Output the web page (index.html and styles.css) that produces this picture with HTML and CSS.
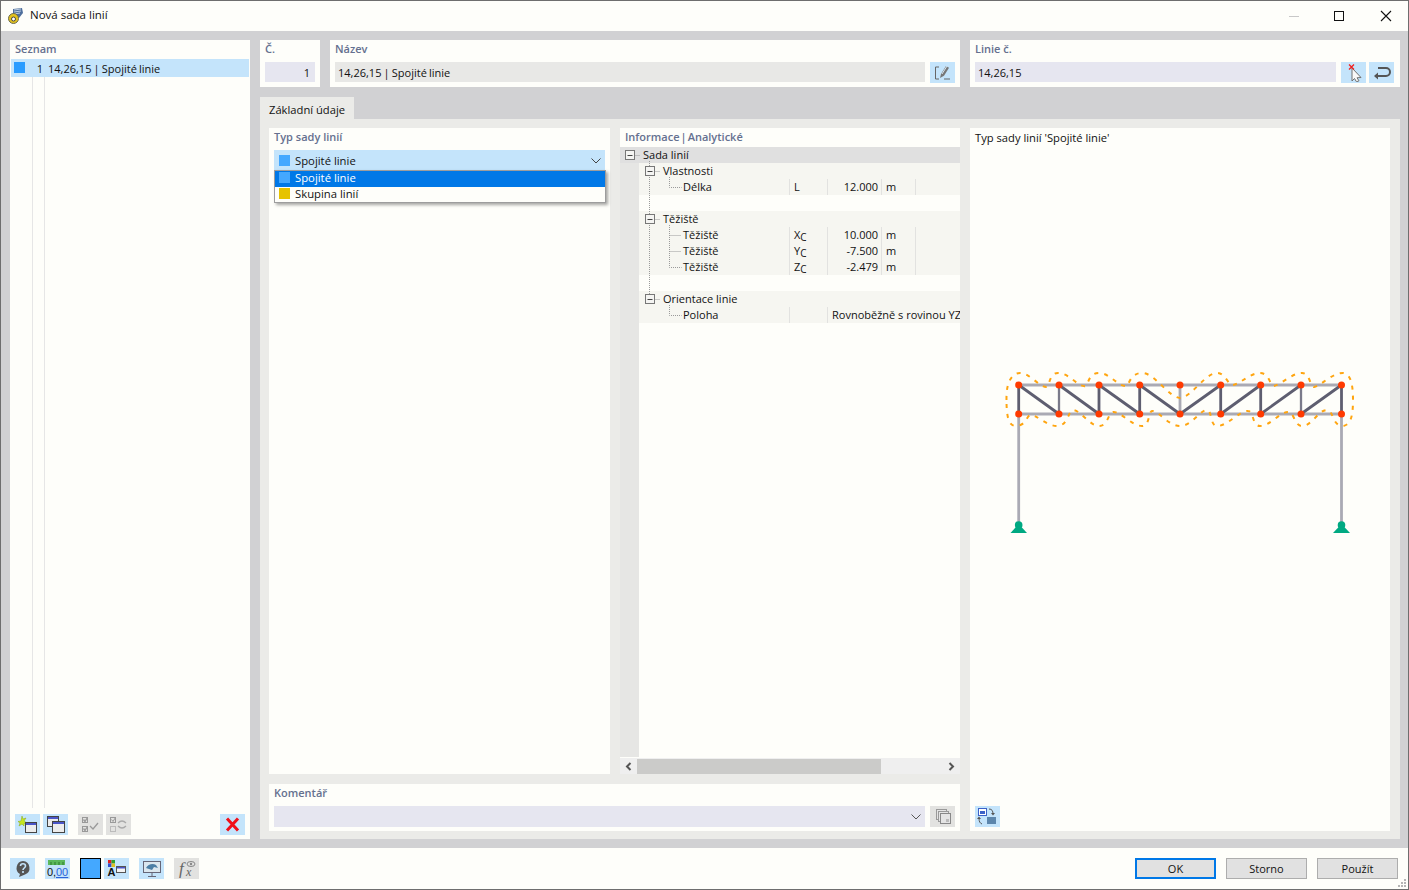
FILE: index.html
```html
<!DOCTYPE html>
<html lang="cs">
<head>
<meta charset="utf-8">
<title>Nová sada linií</title>
<link rel="stylesheet" href="styles.css">
</head>
<body>
<div class="window">
  <header class="titlebar">
    <svg class="app-icon" width="18" height="18" viewBox="0 0 18 18">
      <path d="M6 2l9-1 1 5-4 5H6z" fill="#4f6f9c"/>
      <path d="M7 3l7-1M7 5l7-1M7 7l6-1" stroke="#b9cbe0" stroke-width="1"/>
      <circle cx="6.5" cy="11.5" r="5" fill="#e3c21c" stroke="#6a6a50"/>
      <circle cx="6.5" cy="12" r="2" fill="#fefefa" stroke="#444" stroke-width="1"/>
    </svg>
    <span class="title-text">Nová sada linií</span>
    <div class="win-controls">
      <svg width="140" height="14" viewBox="0 0 140 14">
        <path d="M46 7.5h10" stroke="#c8c8c8"/>
        <rect x="91.5" y="2.5" width="9" height="9" fill="none" stroke="#111"/>
      </svg>
      <svg class="close-x" width="12" height="12" viewBox="0 0 12 12"><path d="M1 1l10 10M11 1L1 11" stroke="#111" stroke-width="1.1"/></svg>
    </div>
  </header>

  <div class="main">
    <aside class="sidebar">
      <div class="panel-label">Seznam</div>
      <div class="list">
        <div class="list-row">
          <span class="swatch swatch-blue list-swatch"></span>
          <span class="list-no">1</span>
          <span class="list-name">14,26,15 | Spojité linie</span>
        </div>
      </div>
      <div class="side-tools">
        <button class="ib ib-blue"><svg width="21" height="19" viewBox="0 0 21 19"><path d="M5 1l1 3 3-1-2 3 3 2-3 .5L7 11 5 9 2 11l1-3-2-1.500 3-.5z" fill="#c5e61f" stroke="#8aa80e" stroke-width=".5"/><rect x="8.500" y="7.500" width="11" height="10" fill="#ececec" stroke="#444"/><rect x="9" y="8" width="10" height="2" fill="#4a55c8"/></svg></button>
        <button class="ib ib-blue"><svg width="21" height="19" viewBox="0 0 21 19"><rect x="2.500" y="1.500" width="11" height="10" fill="#ececec" stroke="#444"/><rect x="3" y="2" width="10" height="2" fill="#4a55c8"/><rect x="7.500" y="6.500" width="12" height="11" fill="#ececec" stroke="#444"/><rect x="8" y="7" width="11" height="2" fill="#4a55c8"/></svg></button>
        <button class="ib ib-grey tool-gap"><svg width="21" height="19" viewBox="0 0 21 19"><rect x="2.500" y="2.500" width="5" height="5" fill="none" stroke="#999"/><rect x="2.500" y="11.500" width="5" height="5" fill="none" stroke="#999"/><path d="M3.500 4.500l1.500 2 2.500-4M3.500 13.500l1.500 2 2.500-4M10 11l3 3 5-6" fill="none" stroke="#999" stroke-width="1.300"/></svg></button>
        <button class="ib ib-grey"><svg width="21" height="19" viewBox="0 0 21 19"><rect x="2.500" y="2.500" width="5" height="5" fill="none" stroke="#999"/><rect x="2.500" y="11.500" width="5" height="5" fill="none" stroke="#bbb"/><path d="M3.500 4.500l1.500 2 2.500-4" fill="none" stroke="#999"/><path d="M10 8c3-3 6-2 8 0M18 11c-3 3-6 2-8 0" fill="none" stroke="#aaa" stroke-width="1.300"/></svg></button>
        <button class="ib ib-blue tool-end"><svg width="21" height="19" viewBox="0 0 21 19"><path d="M5 3.500l11 12M16 3.500l-11 12" stroke="#f0101a" stroke-width="3"/></svg></button>
      </div>
    </aside>

    <section class="content">
      <div class="toprow">
        <div class="card card-no">
          <div class="panel-label">Č.</div>
          <div class="fieldrow"><div class="field field-lav field-right">1</div></div>
        </div>
        <div class="card card-name">
          <div class="panel-label">Název</div>
          <div class="fieldrow">
            <div class="field field-grey pipe-text">14,26,15 | Spojité linie</div>
            <button class="ib ib-blue"><svg width="21" height="19" viewBox="0 0 21 19"><path d="M7 4H3.500v12H7M12 16h6" fill="none" stroke="#666"/><path d="M8 15l1-4 5-8 3 1.700-5 8z" fill="#777"/><path d="M10 11l5-8" stroke="#d8e8f4"/></svg></button>
          </div>
        </div>
        <div class="card card-lines">
          <div class="panel-label">Linie č.</div>
          <div class="fieldrow">
            <div class="field field-lav">14,26,15</div>
            <button class="ib ib-blue"><svg width="21" height="19" viewBox="0 0 21 19"><path d="M9 5l9 9.500-4 .3 2 3-2.500 1-2-3.300-2.500 2.500z" fill="#f8f8f8" stroke="#707070"/><path d="M6 1.500l5 5M11 1.500l-5 5" stroke="#f02020" stroke-width="1.300"/></svg></button>
            <button class="ib ib-blue btn-tight"><svg width="21" height="19" viewBox="0 0 21 19"><path d="M7 5h8a3.500 3.500 0 0 1 0 8H4" fill="none" stroke="#555" stroke-width="2"/><path d="M7 9.500L3 13l4 3.500z" fill="#555"/></svg></button>
          </div>
        </div>
      </div>

      <div class="tabbar"><div class="tab">Základní údaje</div></div>

      <div class="pane">
        <div class="pane-left">
          <div class="pane-upper">
            <div class="type-panel">
              <div class="panel-label">Typ sady linií</div>
              <div class="combo">
                <span class="swatch swatch-light"></span>
                <span>Spojité linie</span>
                <svg class="chev" width="10" height="6" viewBox="0 0 10 6"><path d="M.5.5L5 5 9.500.5" fill="none" stroke="#444"/></svg>
              </div>
              <div class="popup">
                <div class="popup-item popup-sel"><span class="swatch swatch-light"></span><span>Spojité linie</span></div>
                <div class="popup-item"><span class="swatch swatch-yellow"></span><span>Skupina linií</span></div>
              </div>
            </div>

            <div class="info-panel">
              <div class="panel-label info-label">Informace | Analytické</div>
              <div class="tree">
                <div class="tree-gutter"></div>
                <div class="tree-body">
                  <div class="tr tr-head"><span class="tn lvl0">Sada linií</span></div>
                  <div class="tr tr-alt"><span class="tn lvl1">Vlastnosti</span></div>
                  <div class="tr tr-alt"><span class="tn lvl2">Délka</span><span class="ts">L</span><span class="tv">12.000</span><span class="tu">m</span><span class="te"></span></div>
                  <div class="tr"></div>
                  <div class="tr tr-alt"><span class="tn lvl1">Těžiště</span></div>
                  <div class="tr tr-alt"><span class="tn lvl2">Těžiště</span><span class="ts">X<span class="sub">C</span></span><span class="tv">10.000</span><span class="tu">m</span><span class="te"></span></div>
                  <div class="tr tr-alt"><span class="tn lvl2">Těžiště</span><span class="ts">Y<span class="sub">C</span></span><span class="tv">-7.500</span><span class="tu">m</span><span class="te"></span></div>
                  <div class="tr tr-alt"><span class="tn lvl2">Těžiště</span><span class="ts">Z<span class="sub">C</span></span><span class="tv">-2.479</span><span class="tu">m</span><span class="te"></span></div>
                  <div class="tr"></div>
                  <div class="tr tr-alt"><span class="tn lvl1">Orientace linie</span></div>
                  <div class="tr tr-alt"><span class="tn lvl2">Poloha</span><span class="ts"></span><span class="tw">Rovnoběžně s rovinou YZ</span></div>
                </div>
                <svg class="tree-lines" width="100" height="176" viewBox="0 0 100 176">
                  <g fill="none" stroke="#9a9a9a" stroke-dasharray="1 1">
                    <path d="M14.500 8.500h6M34.500 24.500h6M34.500 72.500h6M34.500 152.500h6"/>
                    <path d="M29.500 14v134"/>
                    <path d="M49.500 30v10.500h12M49.500 78v42.500h12M49.500 88.500h12M49.500 104.500h12M49.500 158v10.500h12"/>
                  </g>
                  <g fill="#f4f4f2" stroke="#777">
                    <rect x="5.500" y="3.500" width="9" height="9"/>
                    <rect x="25.500" y="19.500" width="9" height="9"/>
                    <rect x="25.500" y="67.500" width="9" height="9"/>
                    <rect x="25.500" y="147.500" width="9" height="9"/>
                  </g>
                  <path d="M7.500 8.500h5M27.500 24.500h5M27.500 72.500h5M27.500 152.500h5" stroke="#444"/>
                </svg>
              </div>
              <div class="hscroll">
                <svg class="arrow" width="17" height="15" viewBox="0 0 17 15"><path d="M10.500 4L7 7.500l3.500 3.500" fill="none" stroke="#555" stroke-width="2"/></svg>
                <div class="thumb"></div>
                <svg class="arrow arrow-end" width="17" height="15" viewBox="0 0 17 15"><path d="M6.500 4L10 7.500 6.500 11" fill="none" stroke="#555" stroke-width="2"/></svg>
              </div>
            </div>
          </div>

          <div class="comment">
            <div class="panel-label">Komentář</div>
            <div class="fieldrow">
              <div class="field field-lav field-combo"><svg class="chev" width="10" height="6" viewBox="0 0 10 6"><path d="M.5.5L5 5 9.500.5" fill="none" stroke="#555"/></svg></div>
              <button class="ib ib-grey"><svg width="21" height="19" viewBox="0 0 21 19"><rect x="4.500" y="2.500" width="10" height="10" fill="#e4e4e4" stroke="#999"/><rect x="6.500" y="4.500" width="10" height="10" fill="#e4e4e4" stroke="#999"/><rect x="8.500" y="6.500" width="10" height="10" fill="#e4e4e4" stroke="#888"/><rect x="14" y="12" width="3" height="3" fill="#bbb"/></svg></button>
            </div>
          </div>
        </div>

        <div class="preview">
          <div class="preview-title">Typ sady linií 'Spojité linie'</div>
          <div class="canvas">
            <svg class="truss" width="420" height="640" viewBox="970 147 420 640">
              <g stroke="#aaaab4" stroke-width="2.800" fill="none">
                <path d="M1018.700 385H1341.500M1018.700 414H1341.500M1018.700 414V528M1341.500 414V528"/>
                <path d="M1180 385v29"/>
              </g>
              <g stroke="#5e5e70" stroke-width="2.800" fill="none">
                <path d="M1018.700 385v29M1099 385v29M1139.700 385v29M1220.700 385v29M1260.700 385v29M1341.500 385v29"/>
                <path d="M1018.700 385L1059 414M1059 385L1099 414M1099 385L1139.700 414M1139.700 385L1180 414M1180 414L1220.700 385M1220.700 414L1260.700 385M1260.700 414L1301 385M1301 414L1341.500 385"/>
              </g>
              <path d="M1059 385v29M1301 385v29" stroke="#7a7a8a" stroke-width="2.300"/>
              <path fill="none" stroke="#ffa50f" stroke-width="2" stroke-dasharray="4 6"
                d="M1006.500 400C1006 382 1012 373 1020 373C1030 373 1040 388 1047 387C1050 383 1050 373 1058 373C1070 373 1078 388 1086 386C1089 381 1090 373 1099 373C1110 373 1118 387 1127 386C1130 381 1132 373 1142 373C1155 373 1168 397 1180 398C1192 397 1205 373 1217 373C1226 373 1228 386 1233 385C1240 384 1250 373 1260 373C1270 373 1270 387 1274 386C1282 384 1292 373 1302 373C1310 373 1310 387 1314 387C1322 385 1332 373 1343 373C1350 374 1353 382 1353 400C1353 418 1350 425 1343 426C1332 426 1334 411 1327 410C1318 410 1312 426 1302 426C1294 426 1294 411 1288 412C1280 412 1270 426 1260 426C1252 426 1254 411 1248 411C1240 410 1228 426 1217 426C1210 426 1212 410 1207 410C1200 410 1192 426 1180 426C1168 426 1158 410 1152 411C1148 412 1150 426 1142 426C1132 426 1120 411 1113 412C1108 413 1108 426 1099 426C1090 426 1080 410 1073 410C1068 411 1068 426 1057 426C1046 426 1036 414 1030 415C1026 417 1026 426 1015 426C1009 425 1006.500 418 1006.500 400Z"/>
              <g fill="#ff3a00">
                <circle cx="1018.700" cy="385" r="3.500"/><circle cx="1059" cy="385" r="3.500"/><circle cx="1099" cy="385" r="3.500"/><circle cx="1139.700" cy="385" r="3.500"/><circle cx="1180" cy="385" r="3.500"/><circle cx="1220.700" cy="385" r="3.500"/><circle cx="1260.700" cy="385" r="3.500"/><circle cx="1301" cy="385" r="3.500"/><circle cx="1341.500" cy="385" r="3.500"/>
                <circle cx="1018.700" cy="414" r="3.500"/><circle cx="1059" cy="414" r="3.500"/><circle cx="1099" cy="414" r="3.500"/><circle cx="1139.700" cy="414" r="3.500"/><circle cx="1180" cy="414" r="3.500"/><circle cx="1220.700" cy="414" r="3.500"/><circle cx="1260.700" cy="414" r="3.500"/><circle cx="1301" cy="414" r="3.500"/><circle cx="1341.500" cy="414" r="3.500"/>
              </g>
              <g fill="#00a982">
                <circle cx="1018.700" cy="525" r="3.800"/><path d="M1018.700 524L1027 533H1010.500Z"/>
                <circle cx="1341.500" cy="525" r="3.800"/><path d="M1341.500 524L1350 533H1333Z"/>
              </g>
            </svg>
          </div>
          <button class="ib ib-blue preview-btn"><svg width="21" height="19" viewBox="0 0 21 19"><rect x="1.500" y="1.500" width="8" height="7" fill="#fff" stroke="#3c62c8"/><rect x="3" y="4" width="5" height="3" fill="#3c62c8"/><rect x="10" y="10" width="9" height="7" fill="#5c86ac"/><path d="M12 2c3 0 4 2 4 5M5 17c-2-1-3-2-3-6" fill="none" stroke="#555"/><path d="M14 6l2 2.500L18 6zM0 12l2-2.500L4 12z" fill="#555"/></svg></button>
        </div>
      </div>
    </section>
  </div>

  <footer class="footer">
    <button class="ib ib-blue"><svg width="21" height="19" viewBox="0 0 21 19"><path d="M11 2a7 7 0 0 1 2 13.500L7 18l1-3A7 7 0 0 1 11 2z" fill="#555"/><path d="M8.500 7c0-3 5-3 5 0 0 2-2.500 2-2.500 4M11 12v2" fill="none" stroke="#c4e4fb" stroke-width="1.600"/></svg></button>
    <button class="ib ib-blue foot-gap"><svg width="23" height="20" viewBox="0 0 23 20"><rect x="2" y="1" width="17" height="5" fill="#5cb85c"/><path d="M5 3v3M9 3v3M13 3v3M17 3v3" stroke="#2f7a2f"/><text x="1" y="17" class="num-a">0,</text><text x="10" y="17" class="num-b">00</text></svg></button>
    <span class="foot-swatch"></span>
    <button class="ib ib-blue foot-tight"><svg width="21" height="19" viewBox="0 0 21 19"><rect x="2" y="1" width="3.500" height="3.500" fill="#e02020"/><rect x="5.500" y="1" width="3.500" height="3.500" fill="#30a030"/><rect x="2" y="4.500" width="3.500" height="3.500" fill="#3050d0"/><rect x="5.500" y="4.500" width="3.500" height="3.500" fill="#e0c020"/><text x="1.500" y="17" class="glyph-a">A</text><rect x="10.500" y="7.500" width="9" height="6" fill="#f4f4f4" stroke="#555"/><rect x="11" y="8" width="8" height="1.500" fill="#4a55c8"/></svg></button>
    <button class="ib ib-blue foot-gap"><svg width="21" height="19" viewBox="0 0 21 19"><rect x="2.500" y="2.500" width="17" height="11" fill="#dbe7ef" stroke="#667"/><path d="M5 9c2-4 7-5 10-3l2 3-4-1-2 3z" fill="#4c7fa6"/><path d="M11 13.500V17M7 17.500h8" stroke="#667"/></svg></button>
    <button class="ib ib-grey foot-gap"><svg width="21" height="19" viewBox="0 0 21 19"><text x="3" y="15" class="glyph-f">f</text><text x="10" y="17" class="glyph-x">x</text><ellipse cx="15" cy="5" rx="4" ry="2.500" fill="none" stroke="#888"/><circle cx="15" cy="5" r="1.200" fill="#888"/></svg></button>
    <div class="actions">
      <button class="btn btn-default">OK</button>
      <button class="btn">Storno</button>
      <button class="btn">Použít</button>
    </div>
    <svg class="grip" width="10" height="10" viewBox="0 0 10 10"><path d="M7 1h2v2H7zM4 4h2v2H4zM7 4h2v2H7zM1 7h2v2H1zM4 7h2v2H4zM7 7h2v2H7z" fill="#b5b5b5"/></svg>
  </footer>
</div>
</body>
</html>
```
FILE: styles.css
```css
* { box-sizing: border-box; }
html, body { margin: 0; padding: 0; height: 100%; }
body { font-family: "Open Sans", "Noto Sans", sans-serif; font-size: 11px; color: #111; background: #d1d1d3; }
button { font: inherit; color: inherit; padding: 0; border: 0; }

.window { width: 1409px; height: 890px; border: 1px solid #6e6e6e; display: flex; flex-direction: column; background: #fefefa; overflow: hidden; }

.titlebar { height: 30px; flex: none; display: flex; align-items: center; padding-left: 6px; padding-bottom: 1px; position: relative; }
.app-icon { flex: none; }
.title-text { margin-left: 5px; font-size: 11.500px; position: relative; top: -1px; }
.win-controls { margin-left: auto; display: flex; align-items: center; padding-right: 16px; }
.win-controls svg:first-child { margin-right: -2px; }
.close-x { margin-left: -1px; }

.main { flex: 1; min-height: 0; background: #d1d1d3; display: flex; gap: 10px; padding: 9px 8px 9px 9px; }

.sidebar { width: 240px; flex: none; background: #fefefa; display: flex; flex-direction: column; padding: 1px; }
.panel-label { font-weight: 600; color: #65708f; line-height: 15px; height: 15px; }
.sidebar .panel-label { padding-left: 4px; margin: 0 0 3px; }
.list { flex: 1; position: relative; background: linear-gradient(#e6e6e6, #e6e6e6) 21px 0 / 1px 100% no-repeat, linear-gradient(#e6e6e6, #e6e6e6) 33px 0 / 1px 100% no-repeat; }
.list-row { height: 18px; background: #c4e4fb; display: flex; align-items: center; }
.list-swatch { margin-left: 3px; margin-top: -2px; }
.list-no { width: 18px; text-align: right; }
.list-name { margin-left: 5px; word-spacing: -.7px; }
.pipe-text { word-spacing: -.7px; }
.swatch { width: 11px; height: 11px; flex: none; display: inline-block; }
.swatch-blue { background: #2a9cff; }
.swatch-light { background: #44a8ff; }
.swatch-yellow { background: #e6c300; }

.side-tools { display: flex; height: 21px; padding-left: 4px; padding-right: 4px; margin: 6px 0 3px; gap: 3px; }
.ib { width: 25px; height: 21px; flex: none; display: flex; align-items: center; justify-content: center; }
.ib svg { display: block; }
.ib-blue { background: #c4e4fb; }
.ib-grey { background: #e2e2e0; }
.tool-gap { margin-left: 7px; }
.tool-end { margin-left: auto; }

.content { flex: 1; min-width: 0; display: flex; flex-direction: column; }
.toprow { height: 47px; flex: none; display: flex; gap: 10px; }
.card { background: #fefefa; padding: 1px 5px 4px; display: flex; flex-direction: column; }
.card-no { width: 60px; }
.card-name { width: 630px; }
.card-lines { width: 430px; padding-right: 6px; }
.card .panel-label { margin-bottom: 6px; }
.fieldrow { display: flex; gap: 5px; height: 21px; }
.field { flex: 1; min-width: 0; height: 20px; line-height: 22px; padding: 0 3px; }
.field-lav { background: #e6e6f0; }
.field-grey { background: #e8e8e6; }
.field-right { text-align: right; padding-right: 5px; }
.field-combo { display: flex; align-items: center; justify-content: flex-end; padding-right: 4px; height: 21px; }
.btn-tight { margin-left: -2px; }

.tabbar { flex: none; margin-top: 10px; height: 22px; display: flex; }
.tab { width: 94px; background: #ebebe8; line-height: 26px; padding-left: 9px; height: 22px; font-size: 11.200px; }

.pane { flex: 1; min-height: 0; background: #ebebe8; padding: 9px 10px 8px 9px; display: flex; gap: 10px; }
.pane-left { width: 691px; flex: none; display: flex; flex-direction: column; gap: 10px; }
.pane-upper { flex: 1; min-height: 0; display: flex; gap: 10px; }

.type-panel { width: 341px; flex: none; background: #fefefa; padding: 1px 5px; position: relative; font-size: 11.300px; }
.type-panel .panel-label { margin-bottom: 6px; font-size: 11px; }
.combo { height: 21px; background: #c4e4fb; display: flex; align-items: center; padding-left: 5px; gap: 5px; }
.combo .chev { margin-left: auto; margin-right: 4px; }
.popup { position: absolute; left: 5px; top: 42px; width: 332px; height: 33px; background: #fefefa; border: 1px solid #9d9d9d; box-shadow: 2px 2px 3px rgba(0,0,0,.35); }
.popup-item { height: 15.500px; display: flex; align-items: center; gap: 5px; padding: 0 0 1px 4px; }
.popup-sel { background: #0078e7; color: #fff; padding-bottom: 2px; }

.info-panel { flex: 1; min-width: 0; background: #fefefa; display: flex; flex-direction: column; }
.info-label { padding: 1px 5px 0; height: 19px; word-spacing: -1.800px; }
.tree { flex: 1; min-height: 0; display: flex; position: relative; overflow: hidden; }
.tree-gutter { width: 19px; flex: none; background: #e6e6e4; }
.tree-body { flex: 1; min-width: 0; }
.tr { height: 16px; line-height: 16px; display: flex; white-space: nowrap; }
.tr-head { background: #e0e0e0; margin-left: -19px; }
.tr-alt { background: #f6f6f1; }
.tn { width: 150px; flex: none; }
.lvl0 { padding-left: 23px; }
.lvl1 { padding-left: 24px; }
.lvl2 { padding-left: 44px; }
.ts { width: 38px; flex: none; border-left: 1px solid #e2e2e0; padding-left: 4px; }
.tv { width: 54px; flex: none; border-left: 1px solid #e2e2e0; text-align: right; padding-right: 3px; }
.tu { width: 35px; flex: none; padding-left: 4px; border-left: 1px solid #e2e2e0; border-right: 1px solid #e2e2e0; }
.te { flex: 1; }
.tw { flex: 1; border-left: 1px solid #e2e2e0; padding-left: 4px; overflow: hidden; }
.sub { font-size: 10px; position: relative; top: 2px; }
.tree-lines { position: absolute; left: 0; top: 0; }
.hscroll { height: 16px; flex: none; margin-top: 1px; background: #efefef; display: flex; align-items: center; }
.arrow { flex: none; }
.arrow-end { margin-left: auto; }
.thumb { width: 244px; height: 15px; background: #cbcbc9; }

.comment { height: 47px; flex: none; background: #fefefa; padding: 1px 5px 4px; }
.comment .panel-label { margin-bottom: 6px; }

.preview { flex: 1; min-width: 0; background: #fefefa; display: flex; flex-direction: column; padding: 2px 5px 4px; position: relative; font-size: 11.200px; }
.preview-title { line-height: 15px; height: 15px; }
.canvas { flex: 1; min-height: 0; position: relative; }
.truss { position: absolute; left: -5px; top: 2px; }
.preview-btn { flex: none; position: relative; }

.footer { flex: none; height: 41px; display: flex; align-items: center; padding: 0 0 0 9px; position: relative; }
.foot-gap { margin-left: 10px; }
.foot-tight { margin-left: 3px; }
.foot-swatch { width: 21px; height: 21px; background: #44a8ff; border: 1px solid #000; margin-left: 10px; flex: none; }
.num-a { font-family: "Liberation Sans", sans-serif; font-size: 11px; fill: #111; }
.num-b { font-family: "Liberation Sans", sans-serif; font-size: 11px; fill: #2a62d8; text-decoration: underline; }
.glyph-a { font-family: "Liberation Sans", sans-serif; font-size: 11px; font-weight: 700; fill: #111; }
.glyph-f { font-family: "Liberation Serif", serif; font-style: italic; font-size: 17px; fill: #666; }
.glyph-x { font-family: "Liberation Serif", serif; font-style: italic; font-size: 12px; fill: #666; }
.actions { margin-left: auto; display: flex; gap: 10px; padding-right: 10px; }
.btn { width: 81px; height: 21px; background: #e1e1e1; border: 1px solid #adadad; line-height: 19px; }
.btn-default { border: 2px solid #0078e7; line-height: 17px; }
.grip { position: absolute; right: 1px; bottom: 1px; }
```
